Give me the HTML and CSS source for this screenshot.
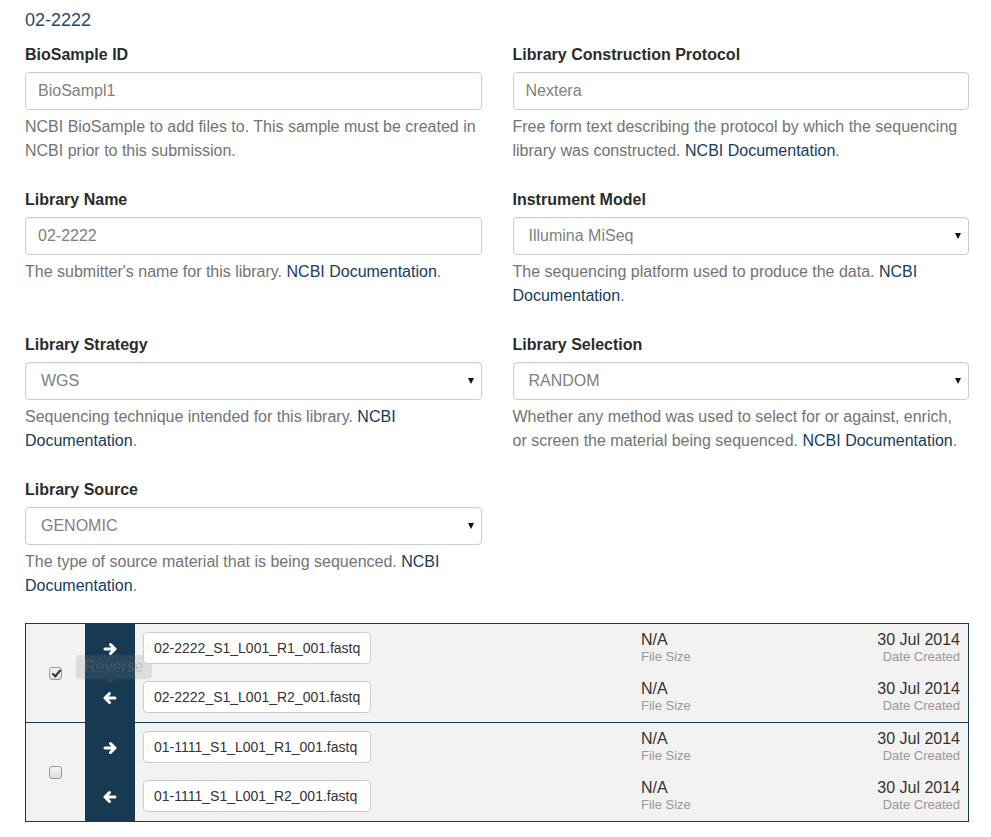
FILE: index.html
```html
<!DOCTYPE html>
<html>
<head>
<meta charset="utf-8">
<link rel="stylesheet" href="styles.css">
</head>
<body>
<div class="page">
  <h4 class="title">02-2222</h4>
  <div class="form-grid">
    <div class="group">
      <label>BioSample ID</label>
      <input class="control" type="text" placeholder="BioSampl1">
      <p class="help">NCBI BioSample to add files to. This sample must be created in NCBI prior to this submission.</p>
    </div>
    <div class="group">
      <label>Library Construction Protocol</label>
      <input class="control" type="text" placeholder="Nextera">
      <p class="help">Free form text describing the protocol by which the sequencing library was constructed. <a href="#">NCBI Documentation</a>.</p>
    </div>
    <div class="group">
      <label>Library Name</label>
      <input class="control" type="text" placeholder="02-2222">
      <p class="help">The submitter's name for this library. <a href="#">NCBI Documentation</a>.</p>
    </div>
    <div class="group">
      <label>Instrument Model</label>
      <div class="select-wrap"><select class="control select"><option>Illumina MiSeq</option></select></div>
      <p class="help">The sequencing platform used to produce the data. <a href="#">NCBI Documentation</a>.</p>
    </div>
    <div class="group">
      <label>Library Strategy</label>
      <div class="select-wrap"><select class="control select"><option>WGS</option></select></div>
      <p class="help">Sequencing technique intended for this library. <a href="#">NCBI Documentation</a>.</p>
    </div>
    <div class="group">
      <label>Library Selection</label>
      <div class="select-wrap"><select class="control select"><option>RANDOM</option></select></div>
      <p class="help">Whether any method was used to select for or against, enrich, or screen the material being sequenced. <a href="#">NCBI Documentation</a>.</p>
    </div>
    <div class="group">
      <label>Library Source</label>
      <div class="select-wrap"><select class="control select"><option>GENOMIC</option></select></div>
      <p class="help">The type of source material that is being sequenced. <a href="#">NCBI Documentation</a>.</p>
    </div>
  </div>

  <div class="pairs">
    <div class="pair">
      <div class="check-cell"><input class="chk" type="checkbox" checked></div>
      <div class="tip"><span class="tip-text">Reverse</span><span class="tip-arrow"></span></div>
      <div class="files">
        <div class="file-line">
          <div class="dir"><svg viewBox="0 0 14 14" width="14" height="14"><path d="M2 7H12M7.5 2.5L12 7L7.5 11.5" fill="none" stroke="#fff" stroke-width="3" stroke-linecap="round" stroke-linejoin="round"/></svg></div>
          <div class="fname-cell"><input class="fname" type="text" value="02-2222_S1_L001_R1_001.fastq"></div>
          <div class="meta"><div class="val">N/A</div><div class="cap">File Size</div></div>
          <div class="meta right"><div class="val">30 Jul 2014</div><div class="cap">Date Created</div></div>
        </div>
        <div class="file-line">
          <div class="dir"><svg viewBox="0 0 14 14" width="14" height="14"><path d="M12 7H2M6.5 2.5L2 7L6.5 11.5" fill="none" stroke="#fff" stroke-width="3" stroke-linecap="round" stroke-linejoin="round"/></svg></div>
          <div class="fname-cell"><input class="fname" type="text" value="02-2222_S1_L001_R2_001.fastq"></div>
          <div class="meta"><div class="val">N/A</div><div class="cap">File Size</div></div>
          <div class="meta right"><div class="val">30 Jul 2014</div><div class="cap">Date Created</div></div>
        </div>
      </div>
    </div>
    <div class="pair">
      <div class="check-cell"><input class="chk" type="checkbox"></div>
      <div class="files">
        <div class="file-line">
          <div class="dir"><svg viewBox="0 0 14 14" width="14" height="14"><path d="M2 7H12M7.5 2.5L12 7L7.5 11.5" fill="none" stroke="#fff" stroke-width="3" stroke-linecap="round" stroke-linejoin="round"/></svg></div>
          <div class="fname-cell"><input class="fname" type="text" value="01-1111_S1_L001_R1_001.fastq"></div>
          <div class="meta"><div class="val">N/A</div><div class="cap">File Size</div></div>
          <div class="meta right"><div class="val">30 Jul 2014</div><div class="cap">Date Created</div></div>
        </div>
        <div class="file-line">
          <div class="dir"><svg viewBox="0 0 14 14" width="14" height="14"><path d="M12 7H2M6.5 2.5L2 7L6.5 11.5" fill="none" stroke="#fff" stroke-width="3" stroke-linecap="round" stroke-linejoin="round"/></svg></div>
          <div class="fname-cell"><input class="fname" type="text" value="01-1111_S1_L001_R2_001.fastq"></div>
          <div class="meta"><div class="val">N/A</div><div class="cap">File Size</div></div>
          <div class="meta right"><div class="val">30 Jul 2014</div><div class="cap">Date Created</div></div>
        </div>
      </div>
    </div>
  </div>
</div>
</body>
</html>
```

FILE: styles.css
```css
* { box-sizing: border-box; }
html, body { margin: 0; padding: 0; background: #fff; }
body {
  font-family: "Liberation Sans", Arial, sans-serif;
  font-size: 16px;
  line-height: 24px;
  color: #333;
}
.page { padding: 0 22px 0 25px; }
.title {
  margin: 10px 0 13px 0;
  font-size: 18px;
  line-height: 20px;
  font-weight: normal;
  color: #1d4a6a;
}
.form-grid {
  display: grid;
  grid-template-columns: 1fr 1fr;
  column-gap: 31px;
}
.group { margin-bottom: 15px; }
.group label {
  display: block;
  font-weight: bold;
  line-height: 24px;
  margin-bottom: 5px;
  color: #2b2b2b;
}
.control {
  display: block;
  width: 100%;
  height: 38px;
  padding: 0 12px;
  border: 1px solid #ccc;
  border-radius: 4px;
  background: #fff;
  font-family: inherit;
  font-size: 16px;
  color: #808080;
  box-shadow: inset 0 1px 1px rgba(0,0,0,0.04);
  outline: none;
}
.control::placeholder { color: #808080; }
.select-wrap { position: relative; }
.select {
  -webkit-appearance: none;
  appearance: none;
  padding: 0 15px 0 15px;
  line-height: 36px;
}
.select-wrap::after {
  content: "";
  position: absolute;
  right: 8px;
  top: 16px;
  border-left: 3.5px solid transparent;
  border-right: 3.5px solid transparent;
  border-top: 6px solid #111;
}
.help {
  margin: 5px 0 10px 0;
  color: #737373;
}
.help a { color: #153d5a; text-decoration: none; }

.pairs {
  border: 1px solid #173a52;
  background: #f2f2f2;
}
.pair {
  display: flex;
  position: relative;
}
.pair + .pair { border-top: 1px solid #173a52; }
.check-cell {
  width: 59px;
  display: flex;
  align-items: center;
  justify-content: center;
}
.chk {
  -webkit-appearance: none;
  appearance: none;
  position: relative;
  margin: 0;
  width: 13px;
  height: 13px;
  border: 1px solid #9a9a9a;
  border-radius: 3px;
  background: linear-gradient(#f4f4f4, #dedede);
}
.chk:checked::after {
  content: "";
  position: absolute;
  left: 3.5px;
  top: 0.5px;
  width: 3px;
  height: 7px;
  border-right: 2px solid #333;
  border-bottom: 2px solid #333;
  transform: rotate(40deg);
}
.files { flex: 1; }
.file-line {
  display: flex;
  height: 49px;
}
.dir {
  width: 50px;
  background: #173a52;
  display: flex;
  justify-content: center;
  align-items: center;
}
.fname-cell {
  width: 506px;
  padding: 8px 0 0 8px;
}
.fname {
  position: relative;
  z-index: 2;
  width: 228px;
  height: 32px;
  padding: 0 10px;
  border: 1px solid #ccc;
  border-radius: 4px;
  background: #fff;
  font-family: inherit;
  font-size: 14px;
  color: #333;
  outline: none;
}
.meta {
  flex: 1;
  padding-top: 7px;
}
.meta.right { text-align: right; padding-right: 8px; }
.val { font-size: 16px; line-height: 18px; color: #333; }
.cap { font-size: 13px; line-height: 15px; color: #999; }

.tip {
  position: absolute;
  left: 50px;
  top: 31px;
  z-index: 1;
  height: 24px;
  padding: 0 8px;
  background: rgba(128,128,128,0.18);
  border-radius: 4px;
  font-size: 16px;
  line-height: 24px;
  color: rgba(128,128,128,0.32);
}
.tip-arrow {
  position: absolute;
  left: 29px;
  bottom: -5px;
  border-left: 5px solid transparent;
  border-right: 5px solid transparent;
  border-top: 5px solid rgba(128,128,128,0.18);
}
```
